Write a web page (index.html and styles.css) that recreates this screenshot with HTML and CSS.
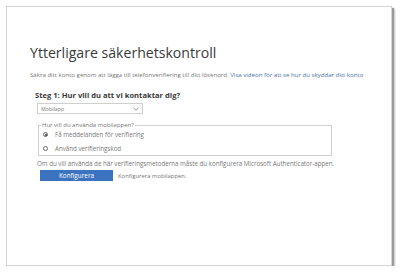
FILE: index.html
```html
<!DOCTYPE html>
<html lang="sv">
<head>
<meta charset="utf-8">
<title>Ytterligare säkerhetskontroll</title>
<link rel="stylesheet" href="styles.css">
</head>
<body>
<div class="frame">
  <div class="content">
    <h1 class="title">Ytterligare säkerhetskontroll</h1>
    <p class="intro">Säkra ditt konto genom att lägga till telefonverifiering till ditt lösenord. <span class="link">Visa videon för att se hur du skyddar ditt konto</span></p>
    <h2 class="step">Steg 1: Hur vill du att vi kontaktar dig?</h2>
    <div class="select">
      <span>Mobilapp</span>
      <svg class="chev" width="6" height="4" viewBox="0 0 6 4"><path d="M0.5 0.8 L3 3.2 L5.5 0.8" fill="none" stroke="#777" stroke-width="0.8"/></svg>
    </div>
    <fieldset class="group">
      <legend>Hur vill du använda mobilappen?</legend>
      <div class="opt"><span class="radio on"></span><span>Få meddelanden för verifiering</span></div>
      <div class="opt"><span class="radio"></span><span>Använd verifieringskod</span></div>
    </fieldset>
    <p class="note">Om du vill använda de här verifieringsmetoderna måste du konfigurera Microsoft Authenticator-appen.</p>
    <div class="actions">
      <button class="btn">Konfigurera</button>
      <span class="hint">Konfigurera mobilappen.</span>
    </div>
  </div>
</div>
</body>
</html>
```

FILE: styles.css
```css
* { box-sizing: border-box; }
html, body { margin: 0; padding: 0; background: #fff; }
body {
  font-family: "Open Sans", "Noto Sans", "DejaVu Sans", sans-serif;
  color: #555;
}
.frame {
  margin: 6px 0 0 6px;
  width: 386px;
  height: 260px;
  border: 1px solid #d4d4d4;
  background: #fff;
  box-shadow: 2px 2px 1px #9a9a9a, 3px 3px 2px #d0d0d0;
}
.content {
  padding: 38px 0 0 26px;
}
.title {
  margin: 0 0 0 -3px;
  font-size: 14.1px;
  line-height: 16px;
  font-weight: 400;
  color: #3a3a3a;
  white-space: nowrap;
}
.intro {
  margin: 10px 0 0 -3px;
  font-size: 6.1px;
  line-height: 8px;
  color: #777;
  white-space: nowrap;
}
.link { color: #4a72a8; }
.step {
  margin: 11px 0 0 2px;
  font-size: 7.6px;
  line-height: 10px;
  font-weight: 700;
  color: #3a3a3a;
}
.select {
  margin: 3px 0 0 4px;
  width: 106px;
  height: 11px;
  border: 1px solid #cfcfcf;
  display: flex;
  align-items: center;
  justify-content: space-between;
  padding: 0 3px 0 3px;
  font-size: 5.3px;
  color: #777;
}
.chev { display: block; }
.group {
  margin: 8px 0 0 5px;
  width: 294px;
  padding: 0 0 0 2px;
  border: 1px solid #cfcfcf;
  min-width: 0;
}
.group legend {
  padding: 0 1px;
  font-size: 6px;
  line-height: 6px;
  color: #777;
}
.opt {
  height: 14px;
  display: flex;
  align-items: center;
  gap: 7px;
  padding-left: 2px;
  font-size: 6.2px;
  color: #777;
}
.opt:first-of-type { height: 13px; }
.radio {
  width: 5px;
  height: 5px;
  border-radius: 50%;
  border: 0.8px solid #666;
  display: block;
  position: relative;
}
.radio.on::after {
  content: "";
  position: absolute;
  left: 0.7px;
  top: 0.7px;
  width: 2px;
  height: 2px;
  border-radius: 50%;
  background: #333;
}
.note {
  margin: 4px 0 0 4px;
  font-size: 6.2px;
  line-height: 8px;
  color: #777;
  white-space: nowrap;
}
.actions {
  margin: 2px 0 0 7px;
  display: flex;
  align-items: center;
  gap: 5px;
}
.btn {
  width: 73px;
  height: 11px;
  border: 0;
  padding: 0;
  background: #3b73c0;
  color: #fff;
  font-family: inherit;
  font-size: 6.4px;
  line-height: 11px;
}
.hint {
  font-size: 5.9px;
  color: #777;
}
```
